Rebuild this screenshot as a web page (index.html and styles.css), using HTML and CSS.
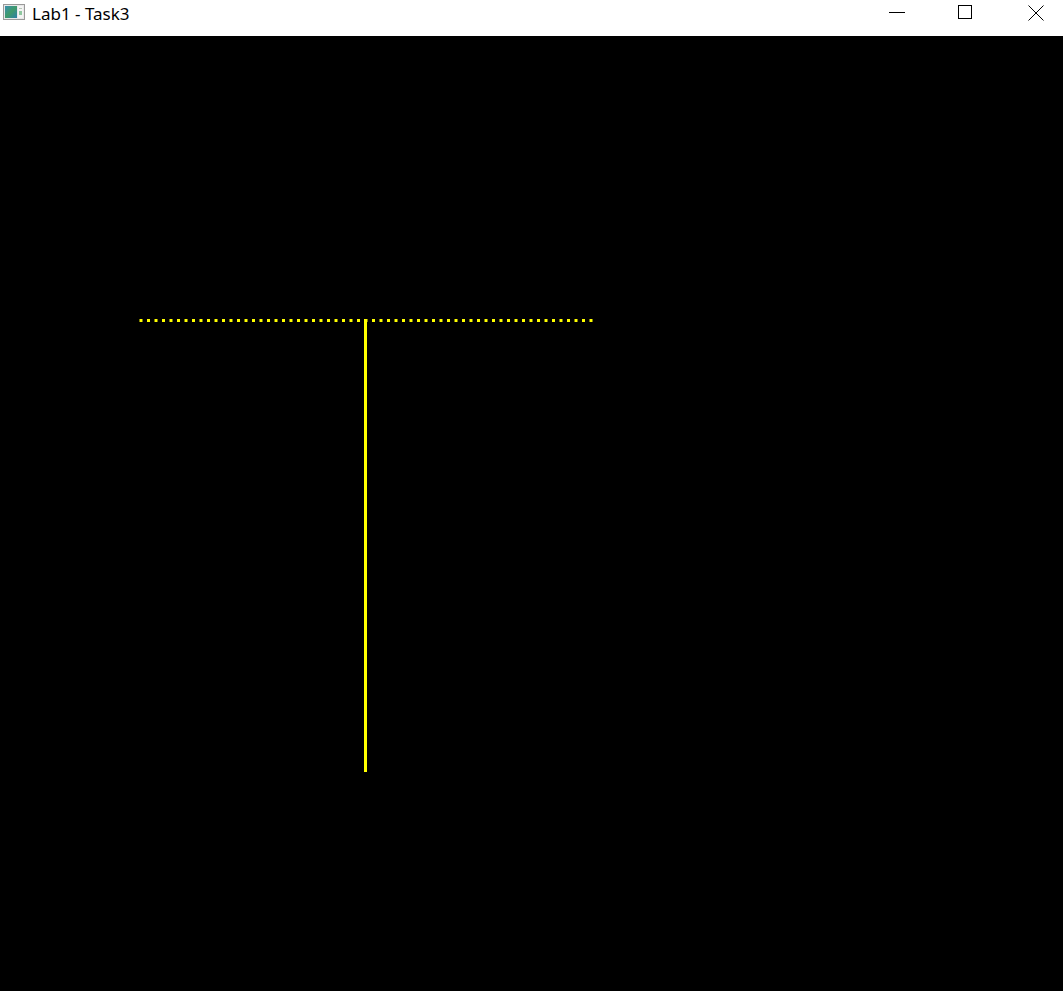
FILE: index.html
```html
<!DOCTYPE html>
<html>
<head>
<meta charset="utf-8">
<title>Lab1 - Task3</title>
<link rel="stylesheet" href="styles.css">
</head>
<body>
<div class="window">
  <div class="titlebar">
    <div class="title-left">
      <svg class="app-icon" width="22" height="16" viewBox="0 0 22 16">
        <defs>
          <linearGradient id="g" x1="0" y1="0" x2="1" y2="1">
            <stop offset="0" stop-color="#3a8fb0"/>
            <stop offset="0.5" stop-color="#3f9a6a"/>
            <stop offset="1" stop-color="#2e7fa8"/>
          </linearGradient>
        </defs>
        <rect x="0.5" y="0.5" width="21" height="15" fill="#e8e8e8" stroke="#9a9a9a"/>
        <rect x="2" y="2" width="12" height="12" fill="url(#g)"/>
        <rect x="15" y="2" width="5" height="12" fill="#f4f4f4"/>
        <rect x="16" y="4" width="3" height="1" fill="#b8c8b8"/>
        <rect x="16" y="7" width="3" height="4" fill="#8fc8a0"/>
      </svg>
      <span class="title-text">Lab1 - Task3</span>
    </div>
    <div class="controls">
      <svg class="ctl ctl-min" width="16" height="16" viewBox="0 0 16 16"><rect x="0" y="7" width="16" height="1" fill="#000"/></svg>
      <svg class="ctl ctl-max" width="16" height="16" viewBox="0 0 16 16"><rect x="0.5" y="0.5" width="13" height="13" fill="none" stroke="#000"/></svg>
      <svg class="ctl ctl-close" width="16" height="16" viewBox="0 0 16 16"><path d="M0.5 0.5 L15.5 15.5 M15.5 0.5 L0.5 15.5" stroke="#000" stroke-width="1" fill="none"/></svg>
    </div>
  </div>
  <div class="canvas">
    <svg class="drawing" width="1063" height="955" viewBox="0 0 1063 955">
      <line x1="139.5" y1="284.5" x2="593" y2="284.5" stroke="#ffff00" stroke-width="3" stroke-dasharray="3 4.5"/>
      <rect x="364" y="283" width="3" height="453" fill="#ffff00"/>
    </svg>
  </div>
</div>
</body>
</html>
```

FILE: styles.css
```css
html, body {
  margin: 0;
  padding: 0;
  background: #000;
}
.window {
  width: 1063px;
  height: 991px;
  display: flex;
  flex-direction: column;
  overflow: hidden;
}
.titlebar {
  height: 36px;
  flex: 0 0 36px;
  background: #fff;
  display: flex;
  justify-content: space-between;
  align-items: flex-start;
}
.title-left {
  display: flex;
  align-items: center;
  height: 26px;
  padding-left: 3px;
}
.app-icon {
  display: block;
  margin-top: -2px;
}
.title-text {
  font-family: "Noto Sans", "DejaVu Sans", sans-serif;
  font-size: 17px;
  color: #000;
  margin-left: 7px;
  margin-top: 1px;
}
.controls {
  display: flex;
  padding-top: 5px;
  padding-right: 19px;
  gap: 53px;
}
.ctl {
  display: block;
}
.ctl-max {
  margin-right: 1px;
}
.canvas {
  flex: 1 1 auto;
  background: #000;
}
.drawing {
  display: block;
}
```
